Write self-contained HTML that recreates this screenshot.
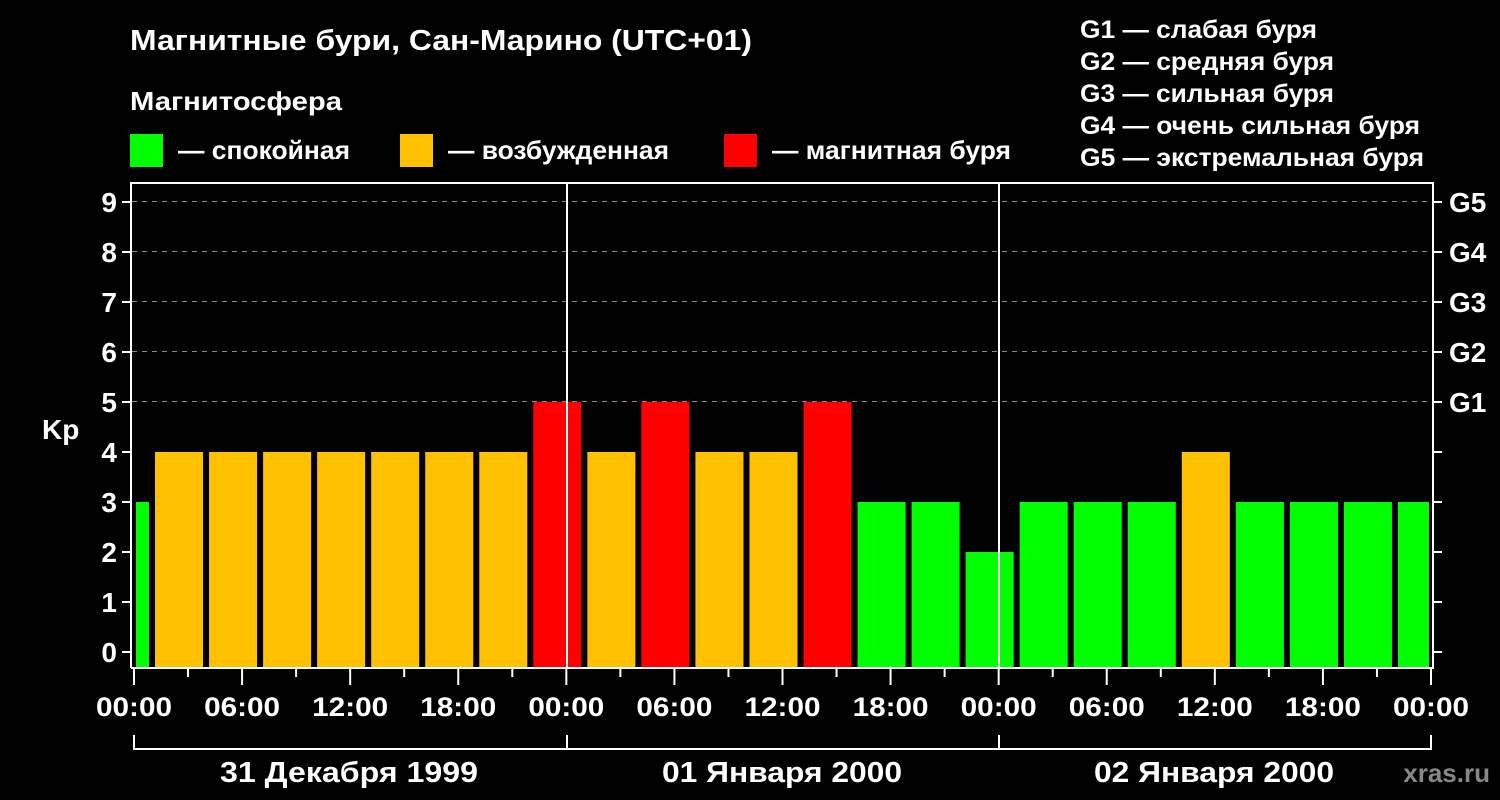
<!DOCTYPE html>
<html><head><meta charset="utf-8"><style>
html,body{margin:0;padding:0;background:#000;}
svg{display:block}
text{font-family:"Liberation Sans",sans-serif;font-weight:bold;fill:#fff}
</style></head><body>
<svg width="1500" height="800" xmlns="http://www.w3.org/2000/svg">
<rect width="1500" height="800" fill="#000"/>
<text x="130" y="50" font-size="29" textLength="622" lengthAdjust="spacingAndGlyphs">Магнитные бури, Сан-Марино (UTC+01)</text>
<text x="130" y="110" font-size="26" textLength="212" lengthAdjust="spacingAndGlyphs">Магнитосфера</text>
<rect x="130" y="134" width="33" height="33" fill="#00ff00"/>
<text x="178" y="159" font-size="26" textLength="172" lengthAdjust="spacingAndGlyphs">— спокойная</text>
<rect x="400" y="134" width="33" height="33" fill="#ffc000"/>
<text x="448" y="159" font-size="26" textLength="221" lengthAdjust="spacingAndGlyphs">— возбужденная</text>
<rect x="724" y="134" width="33" height="33" fill="#ff0000"/>
<text x="772" y="159" font-size="26" textLength="239" lengthAdjust="spacingAndGlyphs">— магнитная буря</text>
<g font-size="25" lengthAdjust="spacingAndGlyphs">
<text x="1080" y="38" textLength="237" lengthAdjust="spacingAndGlyphs">G1 — слабая буря</text>
<text x="1080" y="70" textLength="254" lengthAdjust="spacingAndGlyphs">G2 — средняя буря</text>
<text x="1080" y="102" textLength="254" lengthAdjust="spacingAndGlyphs">G3 — сильная буря</text>
<text x="1080" y="134" textLength="340" lengthAdjust="spacingAndGlyphs">G4 — очень сильная буря</text>
<text x="1080" y="166" textLength="344" lengthAdjust="spacingAndGlyphs">G5 — экстремальная буря</text>
</g>
<g stroke="#888" stroke-width="1" stroke-dasharray="5,5">
<line x1="132" y1="201.5" x2="1433" y2="201.5"/>
<line x1="132" y1="251.5" x2="1433" y2="251.5"/>
<line x1="132" y1="301.5" x2="1433" y2="301.5"/>
<line x1="132" y1="351.5" x2="1433" y2="351.5"/>
<line x1="132" y1="401.5" x2="1433" y2="401.5"/>
</g>
<g id="bars"></g>
<g stroke="#fff" stroke-width="2" fill="none">
<polyline points="131,668 131,183 1433,183 1433,668 131,668"/>
<line x1="567" y1="183" x2="567" y2="668"/>
<line x1="999" y1="183" x2="999" y2="668"/>
<polyline points="134,735 134,749 1431,749 1431,735"/>
<line x1="567" y1="735" x2="567" y2="749"/>
<line x1="999" y1="735" x2="999" y2="749"/>
</g>
<g id="ticks" stroke="#fff" stroke-width="2"></g>
<g font-size="28" text-anchor="end" id="ylab"></g>
<g font-size="28" id="glab">
<text x="1449" y="212">G5</text><text x="1449" y="262">G4</text><text x="1449" y="312">G3</text><text x="1449" y="362">G2</text><text x="1449" y="412">G1</text>
</g>
<text x="42" y="439" font-size="28">Kp</text>
<g font-size="27" text-anchor="middle" id="xlab"></g>
<g font-size="29" text-anchor="middle">
<text x="349" y="782" textLength="258" lengthAdjust="spacingAndGlyphs">31 Декабря 1999</text>
<text x="782" y="782" textLength="240" lengthAdjust="spacingAndGlyphs">01 Января 2000</text>
<text x="1214" y="782" textLength="240" lengthAdjust="spacingAndGlyphs">02 Января 2000</text>
</g>
<text x="1490" y="782" font-size="26" text-anchor="end" style="fill:#888">xras.ru</text>
<script>
var ns="http://www.w3.org/2000/svg";
function el(p,t,a,txt){var e=document.createElementNS(ns,t);for(var k in a)e.setAttribute(k,a[k]);if(txt)e.textContent=txt;document.getElementById(p).appendChild(e);}
var x0=134,ph=1297/72;
var v=[3,4,4,4,4,4,4,4,5,4,5,4,4,5,3,3,2,3,3,3,4,3,3,3,3];
for(var i=0;i<25;i++){var h0=-2+3*i,h1=h0+3;var a=x0+h0*ph+3,b=x0+h1*ph-3;if(a<136)a=136;if(b>1429)b=1429;
var c=v[i]>=5?"#ff0000":v[i]==4?"#ffc000":"#00ff00";var y=652-50*v[i];
el("bars","rect",{x:a,y:y,width:b-a,height:668-y,fill:c});}
for(var k=0;k<=9;k++){var y=652-50*k;el("ticks","line",{x1:122,y1:y,x2:131,y2:y});el("ticks","line",{x1:1433,y1:y,x2:1442,y2:y});
el("ylab","text",{x:117,y:y+10},String(k));}
var labs=["00:00","06:00","12:00","18:00"];
for(var h=0;h<=72;h+=3){var x=x0+h*ph;el("ticks","line",{x1:x,y1:668,x2:x,y2:h%6?677:685});
if(h%6==0)el("xlab","text",{x:x,y:716,textLength:76,lengthAdjust:"spacingAndGlyphs"},labs[(h/6)%4]);}
</script>
</svg>
</body></html>
